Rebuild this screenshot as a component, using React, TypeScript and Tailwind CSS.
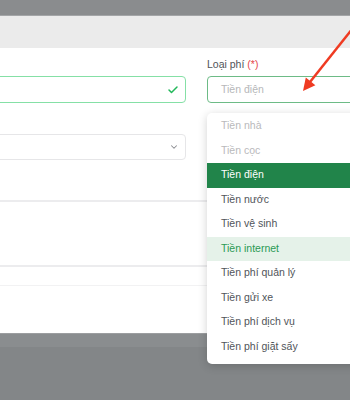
import { Check, ChevronDown } from "lucide-react";

const options = [
  { label: "Tiền nhà", state: "disabled" },
  { label: "Tiền cọc", state: "disabled" },
  { label: "Tiền điện", state: "selected" },
  { label: "Tiền nước", state: "normal" },
  { label: "Tiền vệ sinh", state: "normal" },
  { label: "Tiền internet", state: "hover" },
  { label: "Tiền phí quản lý", state: "normal" },
  { label: "Tiền gửi xe", state: "normal" },
  { label: "Tiền phí dịch vụ", state: "normal" },
  { label: "Tiền phí giặt sấy", state: "normal" },
];

function itemClass(state: string) {
  if (state === "selected") return "bg-[#21844a] text-white";
  if (state === "hover") return "bg-[#e5f2e9] text-[#2a9a54]";
  if (state === "disabled") return "text-[#b9b9bb]";
  return "text-[#505459]";
}

export default function App() {
  return (
    <div className="relative h-[400px] w-[350px] overflow-hidden bg-[#838688] font-['Liberation_Sans',Arial,sans-serif]">
      <div className="h-[16px] border-b border-[#a3a5a7] bg-[#8a8c8e]" />
      <div className="h-[32px] bg-[#ebebeb]" />

      {/* modal body */}
      <div className="h-[285px] bg-white">
        <div className="flex gap-[21px]">
          <div className="-ml-[10px] w-[196px] shrink-0">
            <div className="mt-[28px] flex h-[27px] items-center justify-end rounded-[4px] border-[1.5px] border-[#85e0a6] pr-[6px]">
              <Check size={12} strokeWidth={3} className="text-[#22b85a]" />
            </div>
            <div className="mt-[31px] flex h-[26px] items-center justify-end rounded-[4px] border-[1.5px] border-[#e6e6e8] pr-[6px]">
              <ChevronDown size={10} strokeWidth={2.5} className="text-[#8a8c90]" />
            </div>
          </div>
          <div className="-mr-[20px] flex-1">
            <div className="mt-[10px] h-[12px] text-[10.5px] font-medium leading-[12px] text-[#505459]">
              Loại phí <span className="text-[#e5484d]">(*)</span>
            </div>
            <div className="mt-[6px] flex h-[27px] items-center rounded-[4px] border-[1.5px] border-[#6dbb86] pl-[13px] text-[10.5px] text-[#b6b7b9]">
              Tiền điện
            </div>
          </div>
        </div>
        <div className="mt-[40px] h-[2px] bg-[#ececee]" />
        <div className="mt-[63px] h-[2px] bg-[#ececee]" />
        <div className="mt-[18px] h-px bg-[#f2f2f3]" />
      </div>

      <div className="h-[14px] border-t border-[#9c9ea0] bg-[#8a8d8f]" />

      {/* dropdown */}
      <div className="absolute left-[207px] top-[113px] h-[251px] w-[170px] rounded-[5px] bg-white pt-[1px] pb-[5px] shadow-[0_2px_10px_rgba(0,0,0,0.18)]">
        {options.map((o) => (
          <div
            key={o.label}
            className={`flex h-[24.5px] items-center pl-[14px] text-[10.5px] ${itemClass(o.state)}`}
          >
            {o.label}
          </div>
        ))}
      </div>

      {/* red arrow */}
      <svg className="absolute left-0 top-0" width="350" height="400" viewBox="0 0 350 400">
        <line x1="353" y1="28" x2="310" y2="82" stroke="#ef3b22" strokeWidth="2.5" />
        <polygon points="303,91 305.8,77.6 315.4,85.2" fill="#ef3b22" />
      </svg>
    </div>
  );
}
